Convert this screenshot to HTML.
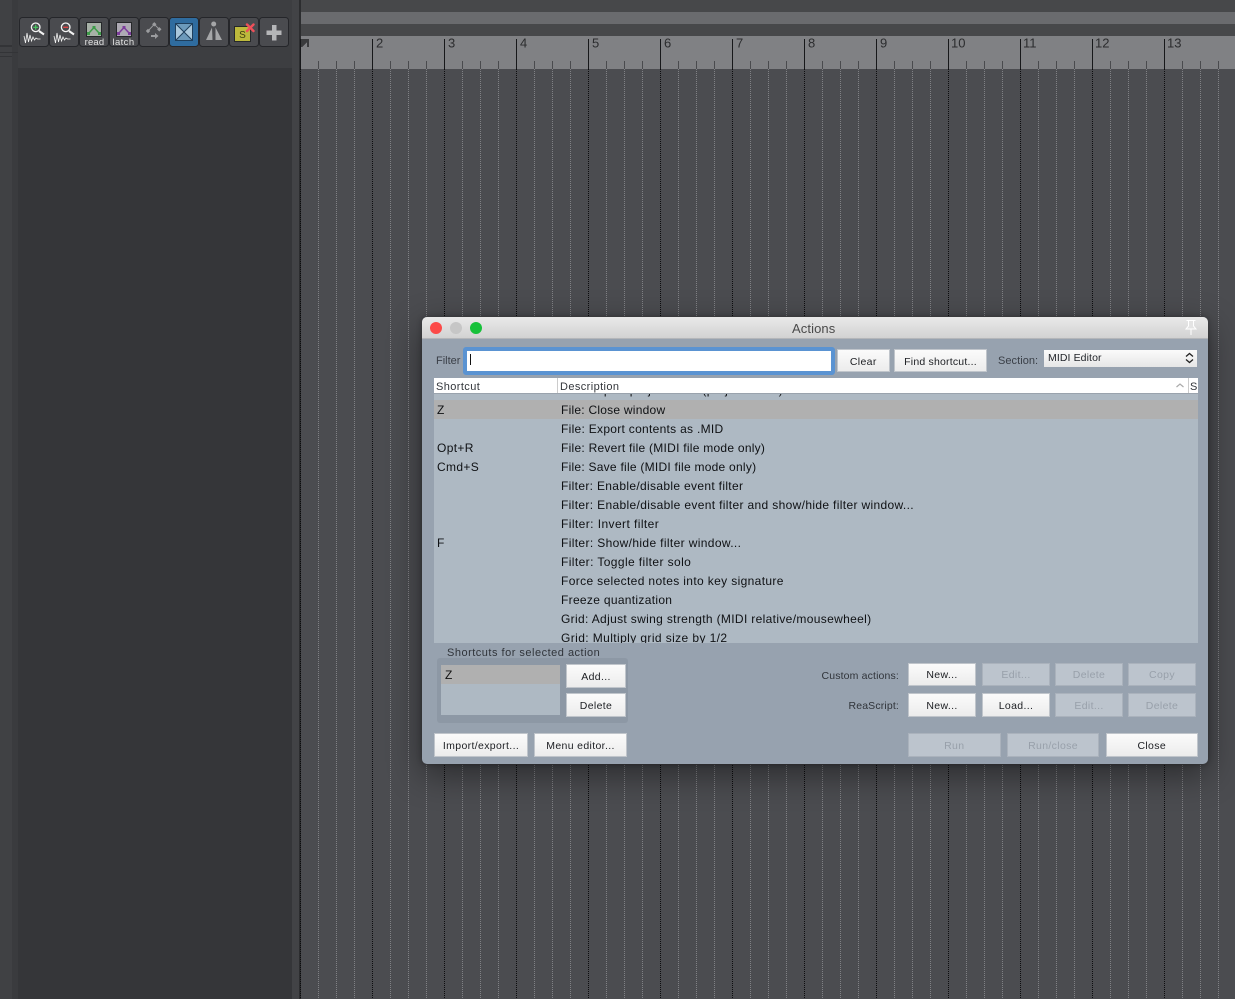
<!DOCTYPE html>
<html><head><meta charset="utf-8"><title>Actions</title>
<style>
html,body{margin:0;padding:0;width:1235px;height:999px;overflow:hidden;background:#4b4c50;font-family:"Liberation Sans",sans-serif}
.a{position:absolute}
#dlg{position:absolute;left:422px;top:317px;width:786px;height:447px;background:#97a2af;border-radius:5px;box-shadow:0 10px 34px rgba(0,0,0,.45),0 0 6px rgba(0,0,0,.3);overflow:hidden;font-size:11px;color:#2a2d33}
#tb{position:absolute;left:0;top:0;width:786px;height:22px;background:linear-gradient(#e9e9e9,#d2d2d2);border-bottom:1px solid #b4b6b9;box-sizing:border-box}
.t{position:absolute;white-space:nowrap;letter-spacing:.35px;line-height:14px}
.b{position:absolute;box-sizing:border-box;background:linear-gradient(#fbfbfb,#ececec);border:1px solid #c0c5cb;text-align:center;color:#1c1e22;font-size:10.5px;letter-spacing:.35px;white-space:nowrap}
.d{background:#bcc4cd;border-color:#aab2bc;color:#98a0aa}
.r{position:absolute;left:0;height:19px;line-height:19px;font-size:12px;letter-spacing:.36px;color:#0f1114;white-space:nowrap}
.r i{font-style:normal;position:absolute;left:3px}
.r b{font-weight:normal;position:absolute;left:127px}
</style></head><body>
<svg class="a" style="left:0;top:0" width="1235" height="999" shape-rendering="crispEdges">
<defs>
<pattern id="g" x="300" y="69" width="72" height="2" patternUnits="userSpaceOnUse">
<rect width="1" height="1" x="0" y="0" fill="#0c0c0e"/><rect width="1" height="1" x="18" y="0" fill="#808185"/><rect width="1" height="1" x="36" y="0" fill="#808185"/><rect width="1" height="1" x="54" y="0" fill="#808185"/>
</pattern>
<pattern id="m" x="300" y="39" width="72" height="30" patternUnits="userSpaceOnUse">
<rect width="1" height="30" x="0" fill="#17181a"/><rect width="1" height="8" x="18" y="22" fill="#4a4b4e"/><rect width="1" height="8" x="36" y="22" fill="#4a4b4e"/><rect width="1" height="8" x="54" y="22" fill="#4a4b4e"/>
</pattern>
</defs>
<rect x="0" y="0" width="1235" height="999" fill="#4b4c50"/>
<rect x="0" y="0" width="300" height="999" fill="#3d3e41"/>
<rect x="0" y="0" width="12" height="999" fill="#404144"/>
<rect x="12" y="0" width="6" height="999" fill="#3a3b3e"/>
<rect x="0" y="45" width="12" height="2" fill="#333437"/>
<rect x="0" y="52" width="18" height="1" fill="#333437"/>
<rect x="0" y="56" width="12" height="1" fill="#333437"/>
<rect x="18" y="68" width="274" height="931" fill="#353639"/>
<rect x="292" y="0" width="7" height="999" fill="#424346"/>
<rect x="299" y="0" width="2" height="999" fill="#2c2d2f"/>
<rect x="301" y="0" width="934" height="12" fill="#47484a"/>
<rect x="301" y="12" width="934" height="12" fill="#6a6b6e"/>
<rect x="301" y="24" width="934" height="12" fill="#47484a"/>
<rect x="301" y="36" width="934" height="33" fill="#808184"/>
<rect x="300" y="39" width="935" height="30" fill="url(#m)"/>
<rect x="300" y="69" width="935" height="930" fill="url(#g)"/>
<path d="M301 39h8v8h-2v-5l-5 5h-1z" fill="#3a3b3d"/>
</svg>
<svg class="a" style="left:0;top:0;font-family:'Liberation Sans',sans-serif" width="300" height="60">
<g fill="#4a4b4f" stroke="#25262a" stroke-width="1">
<rect x="19.5" y="17.5" width="29" height="29" rx="3"/><rect x="49.5" y="17.5" width="29" height="29" rx="3"/><rect x="79.5" y="17.5" width="29" height="29" rx="3"/><rect x="109.5" y="17.5" width="29" height="29" rx="3"/><rect x="139.5" y="17.5" width="29" height="29" rx="3"/>
<rect x="169.5" y="17.5" width="29" height="29" rx="3" fill="#2f6c9f"/>
<rect x="199.5" y="17.5" width="29" height="29" rx="3"/><rect x="229.5" y="17.500" width="29" height="29" rx="3"/><rect x="259.5" y="17.5" width="29" height="29" rx="3"/>
</g>
<!-- zoom in -->
<g fill="none" stroke="#f4f4f4"><path d="M24 36l1.500 7 1.500-10 1.500 9 1.500-7 1.500 6 1.500-4 1.500 3 1.500-2 1.500 1h3" stroke-width=".8"/><circle cx="35.700" cy="27.300" r="4.300" stroke-width="1.300"/><path d="M39 31l5 3.500" stroke-width="2"/><path d="M33.200 27.300h5M35.700 24.800v5" stroke="#48d060" stroke-width="1.100"/></g>
<!-- zoom out -->
<g fill="none" stroke="#f4f4f4"><path d="M54 36l1.500 7 1.500-10 1.500 9 1.500-7 1.500 6 1.500-4 1.500 3 1.500-2 1.500 1h3" stroke-width=".8"/><circle cx="65.700" cy="27.300" r="4.300" stroke-width="1.300"/><path d="M69 31l5 3.500" stroke-width="2"/><path d="M63.200 27.300h5" stroke="#e04545" stroke-width="1.400"/></g>
<!-- read -->
<rect x="86.500" y="22.500" width="15" height="14" fill="#a7b1a7" stroke="#26282a"/><path d="M88.500 33.500l5.500-6 5.500 6" fill="none" stroke="#3d9c48" stroke-width="1.500"/><g fill="#3d9c48"><rect x="87" y="32" width="3" height="3"/><rect x="92.500" y="26" width="3" height="3"/><rect x="98" y="32" width="3" height="3"/></g>
<text x="94.500" y="45" text-anchor="middle" font-size="9.500" letter-spacing=".2" fill="#e2e2e2">read</text>
<!-- latch -->
<rect x="116.500" y="22.500" width="15" height="14" fill="#aeaab4" stroke="#26282a"/><path d="M118.500 33.500l5.500-6 5.500 6" fill="none" stroke="#7d3c9c" stroke-width="1.500"/><g fill="#7d3c9c"><rect x="117" y="32" width="3" height="3"/><rect x="122.500" y="26" width="3" height="3"/><rect x="128" y="32" width="3" height="3"/></g>
<text x="123.500" y="45" text-anchor="middle" font-size="9.500" letter-spacing=".4" fill="#e2e2e2">latch</text>
<!-- envelope nodes -->
<g fill="none" stroke="#9b9c9f" stroke-width="1"><path d="M148 31l6.300-6.700 5 5"/></g>
<g fill="#9b9c9f"><path d="M148 28.800l2.200 2.200-2.200 2.200-2.200-2.200zM154.300 22.100l2.200 2.200-2.200 2.200-2.200-2.200zM159.300 27.100l2.200 2.200-2.200 2.200-2.200-2.200z"/><path d="M151 35h4v-2l3.500 3-3.500 3v-2h-4z"/></g>
<!-- blue -->
<rect x="175.500" y="23.500" width="17" height="17" fill="#a9c8dc" stroke="#1f3f5c"/><path d="M176 24h16l-8 8zM176 40h16l-8-8z" fill="#6c9abb"/><path d="M176 24l16 16M192 24l-16 16" stroke="#1f3f5c" stroke-width="1"/>
<!-- triangle -->
<circle cx="213.700" cy="24" r="2.500" fill="#a5a6a8"/><path d="M212 27.500l-6 12.500h6.500zM215.500 27.500l6.500 12.500h-6.500z" fill="#a5a6a8"/>
<!-- solo -->
<rect x="234.500" y="26.500" width="16" height="15" fill="#bdb93c" stroke="#26282a"/>
<text x="242.500" y="38" text-anchor="middle" font-size="10" fill="#3f3f10">S</text>
<path d="M247 24.500l6.500 6.500M253.500 24.500l-6.500 6.500" stroke="#f0505a" stroke-width="2.400" stroke-linecap="round"/>
<!-- plus -->
<path d="M272 25h4.500v5.500h5v4.500h-5v5.500h-4.500v-5.500h-5.500v-4.500h5.500z" fill="#b5b6b8"/>
</svg>
<svg class="a" style="left:0;top:0;font-family:'Liberation Sans',sans-serif" width="1235" height="60" font-size="13" fill="#2b2c2e">
<text x="376" y="47.500">2</text><text x="448" y="47.500">3</text><text x="520" y="47.500">4</text><text x="592" y="47.500">5</text><text x="664" y="47.500">6</text><text x="736" y="47.500">7</text><text x="808" y="47.500">8</text><text x="880" y="47.500">9</text><text x="951" y="47.500">10</text><text x="1023" y="47.500">11</text><text x="1095" y="47.500">12</text><text x="1167" y="47.500">13</text>
</svg>
<div id="dlg">
<div id="tb">
<div class="a" style="left:8px;top:5px;width:12px;height:12px;border-radius:50%;background:#fc4a48"></div>
<div class="a" style="left:28px;top:5px;width:12px;height:12px;border-radius:50%;background:#c6c6c6"></div>
<div class="a" style="left:48px;top:5px;width:12px;height:12px;border-radius:50%;background:#17c13a"></div>
<div class="t" style="left:370px;top:5px;font-size:13px;color:#4a4a4a;letter-spacing:.1px">Actions</div>
<svg class="a" style="left:761px;top:2px" width="16" height="18"><path d="M3.500 1.500h9M5.500 2v5l-2.500 3h10l-2.500-3v-5M8 10v6" fill="#e4e4e4" stroke="#fff" stroke-width="1"/></svg>
</div>
<div class="t" style="left:14px;top:37px;color:#3a3f47;letter-spacing:0">Filter</div>
<div class="a" style="left:41px;top:30px;width:372px;height:28px;box-sizing:border-box;background:#fff;border:4px solid #5a93d2;border-radius:3px"></div>
<div class="a" style="left:48px;top:37px;width:1px;height:11px;background:#111"></div>
<div class="b" style="left:415px;top:32px;width:52.500px;height:23px;line-height:24px">Clear</div>
<div class="b" style="left:472px;top:32px;width:93px;height:23px;line-height:24px;letter-spacing:.2px">Find shortcut...</div>
<div class="t" style="left:576px;top:37px;color:#3a3f47;letter-spacing:.05px">Section:</div>
<div class="a" style="left:622px;top:33px;width:153px;height:16.500px;background:linear-gradient(#fbfbfb,#e6e6e6);font-size:10.500px;letter-spacing:.1px;line-height:17px;text-indent:4px;color:#22252a">MIDI Editor
<svg class="a" style="left:140px;top:2px" width="11" height="12"><path d="M2 4.500l3.500-3 3.500 3M2 7.500l3.500 3 3.500-3" fill="none" stroke="#222" stroke-width="1.300"/></svg></div>
<div class="a" style="left:12px;top:61px;width:764px;height:16px;background:#fff;border-bottom:1px solid #9aa3ad;box-sizing:border-box;font-size:11px;letter-spacing:.4px;line-height:19px;color:#33363b">
<span class="a" style="left:2px">Shortcut</span><span class="a" style="left:123px;top:0;width:1px;height:15px;background:#ccc"></span><span class="a" style="left:126px">Description</span>
<svg class="a" style="left:741px;top:3px" width="10" height="9"><path d="M1.500 6l3.500-3 3.500 3" fill="none" stroke="#aaa" stroke-width="1.200"/></svg>
<span class="a" style="left:754px;top:0;width:1px;height:15px;background:#ccc"></span><span class="a" style="left:756px;width:8px;overflow:hidden">S</span>
</div>
<div class="a" style="left:12px;top:77px;width:764px;height:249px;background:#aeb9c3;overflow:hidden">
<div class="a" style="left:0;top:6px;width:764px;height:19px;background:#b0b0b0"></div>
<div class="r" style="top:-13px"><b>File: Export project MIDI (project scale)</b></div>
<div class="r" style="top:7px"><i>Z</i><b style="letter-spacing:.24px">File: Close window</b></div>
<div class="r" style="top:26px"><b style="letter-spacing:.29px">File: Export contents as .MID</b></div>
<div class="r" style="top:45px"><i>Opt+R</i><b style="letter-spacing:.26px">File: Revert file (MIDI file mode only)</b></div>
<div class="r" style="top:64px"><i>Cmd+S</i><b style="letter-spacing:.25px">File: Save file (MIDI file mode only)</b></div>
<div class="r" style="top:83px"><b style="letter-spacing:.33px">Filter: Enable/disable event filter</b></div>
<div class="r" style="top:102px"><b style="letter-spacing:.345px">Filter: Enable/disable event filter and show/hide filter window...</b></div>
<div class="r" style="top:121px"><b style="letter-spacing:.42px">Filter: Invert filter</b></div>
<div class="r" style="top:140px"><i>F</i><b>Filter: Show/hide filter window...</b></div>
<div class="r" style="top:159px"><b style="letter-spacing:.4px">Filter: Toggle filter solo</b></div>
<div class="r" style="top:178px"><b>Force selected notes into key signature</b></div>
<div class="r" style="top:197px"><b style="letter-spacing:.31px">Freeze quantization</b></div>
<div class="r" style="top:216px"><b style="letter-spacing:.34px">Grid: Adjust swing strength (MIDI relative/mousewheel)</b></div>
<div class="r" style="top:235px"><b style="letter-spacing:.4px">Grid: Multiply grid size by 1/2</b></div>
</div>
<div class="t" style="left:25px;top:329px;color:#30343a;letter-spacing:.5px">Shortcuts for selected action</div>
<div class="a" style="left:15px;top:341px;width:191px;height:65px;background:#8d98a5;border-radius:3px"></div>
<div class="a" style="left:19px;top:348px;width:119px;height:50px;background:#aeb9c3"></div>
<div class="a" style="left:19px;top:348px;width:119px;height:19px;background:#b0b0b0;font-size:12px;line-height:20px;text-indent:4px;color:#111">Z</div>
<div class="b" style="left:144px;top:347px;width:60px;height:24px;line-height:25px">Add...</div>
<div class="b" style="left:144px;top:376px;width:60px;height:24px;line-height:25px">Delete</div>
<div class="b" style="left:12px;top:416px;width:94px;height:24px;line-height:25px">Import/export...</div>
<div class="b" style="left:112px;top:416px;width:93px;height:24px;line-height:25px">Menu editor...</div>
<div class="t" style="right:309px;top:352px;color:#30343a;font-size:10.500px;letter-spacing:.15px">Custom actions:</div>
<div class="t" style="right:309px;top:382px;color:#30343a;font-size:10.500px;letter-spacing:.15px">ReaScript:</div>
<div class="b" style="left:486px;top:345.500px;width:68px;height:23.500px;line-height:23px">New...</div>
<div class="b d" style="left:560px;top:345.500px;width:68px;height:23.500px;line-height:23px">Edit...</div>
<div class="b d" style="left:633px;top:345.500px;width:68px;height:23.500px;line-height:23px">Delete</div>
<div class="b d" style="left:706px;top:345.500px;width:68px;height:23.500px;line-height:23px">Copy</div>
<div class="b" style="left:486px;top:376px;width:68px;height:24px;line-height:24px">New...</div>
<div class="b" style="left:560px;top:376px;width:68px;height:24px;line-height:24px">Load...</div>
<div class="b d" style="left:633px;top:376px;width:68px;height:24px;line-height:24px">Edit...</div>
<div class="b d" style="left:706px;top:376px;width:68px;height:24px;line-height:24px">Delete</div>
<div class="b d" style="left:486px;top:416px;width:92.500px;height:24px;line-height:25px">Run</div>
<div class="b d" style="left:585px;top:416px;width:92px;height:24px;line-height:25px">Run/close</div>
<div class="b" style="left:683.500px;top:416px;width:92.500px;height:24px;line-height:25px">Close</div>
</div>
</body></html>
